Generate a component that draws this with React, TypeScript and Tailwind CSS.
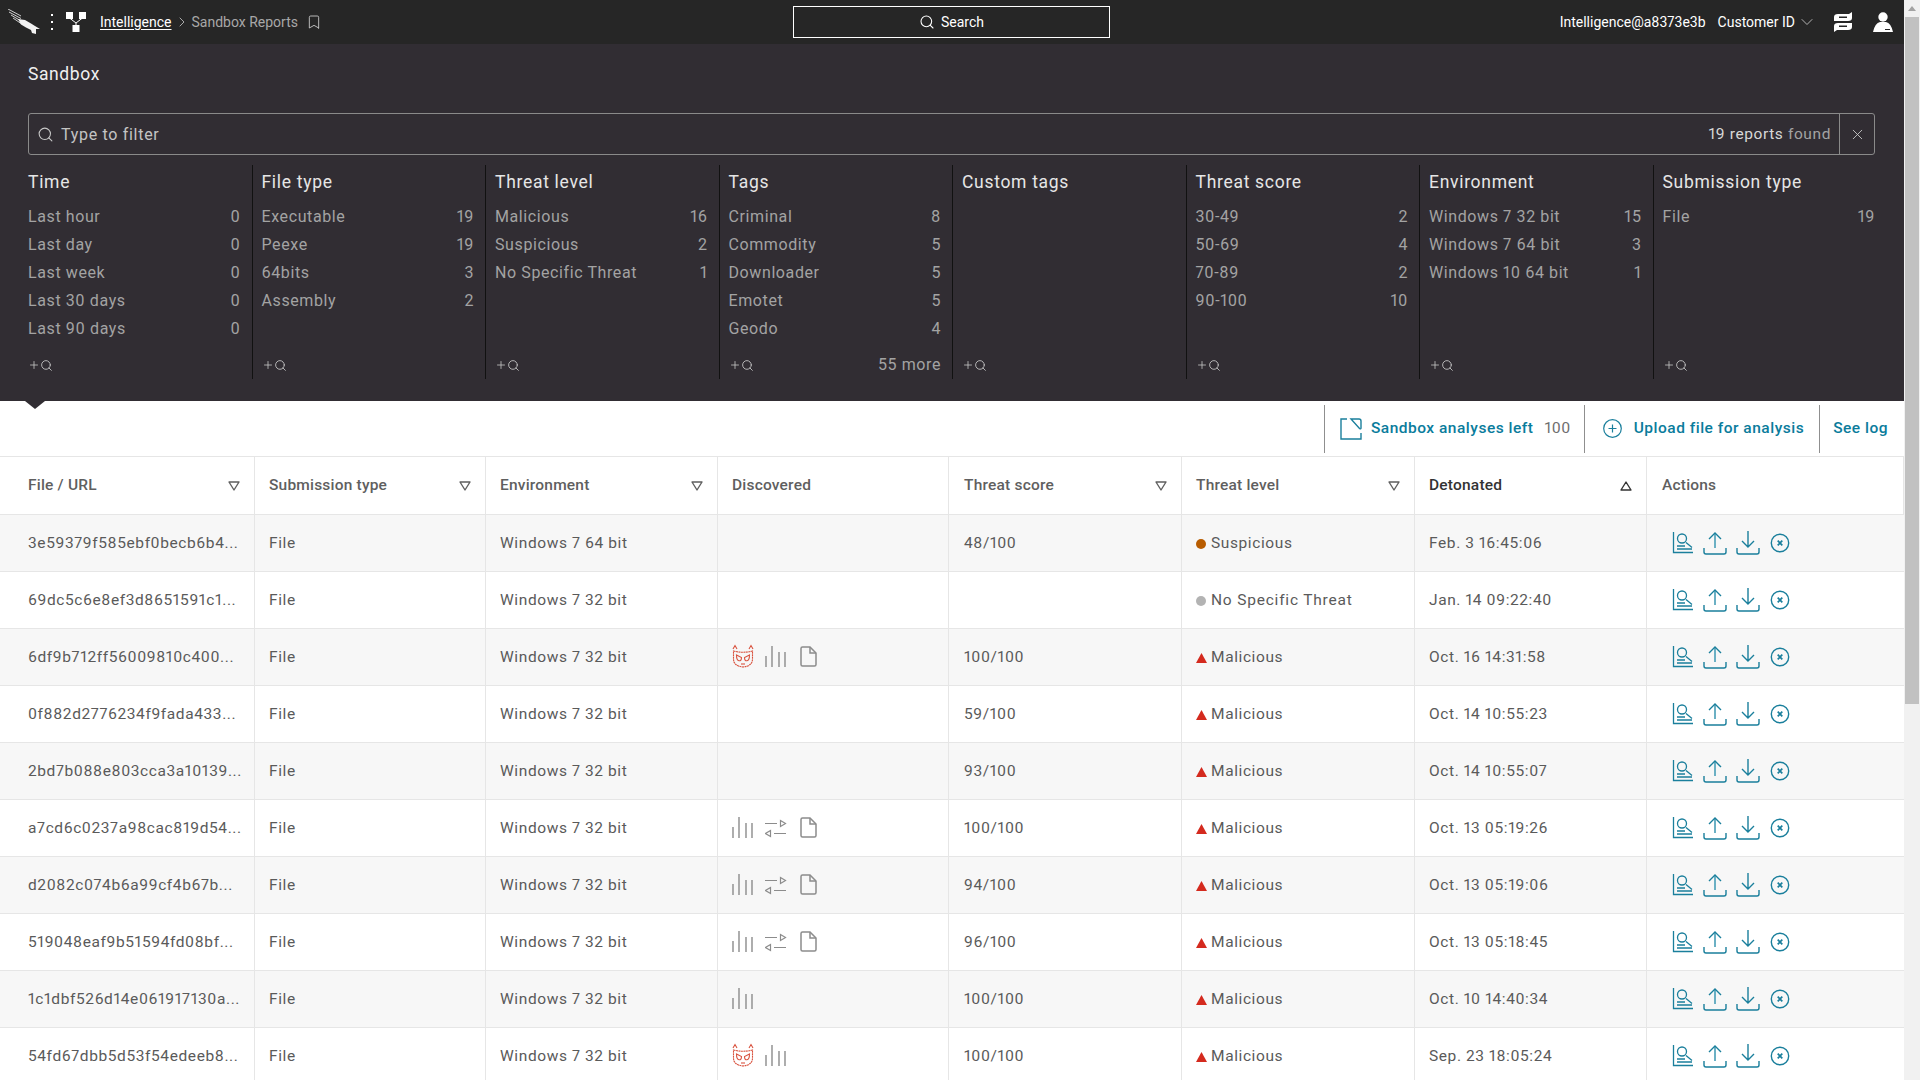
import { Bookmark, ChevronDown, ChevronRight, Plus, Search, X } from "lucide-react"

const COLS = "grid grid-cols-[255px_231px_232px_231px_233px_233px_232px_257px]"

const FACETS = [
  { title: "Time", items: [["Last hour", "0"], ["Last day", "0"], ["Last week", "0"], ["Last 30 days", "0"], ["Last 90 days", "0"]] },
  { title: "File type", items: [["Executable", "19"], ["Peexe", "19"], ["64bits", "3"], ["Assembly", "2"]] },
  { title: "Threat level", items: [["Malicious", "16"], ["Suspicious", "2"], ["No Specific Threat", "1"]] },
  { title: "Tags", items: [["Criminal", "8"], ["Commodity", "5"], ["Downloader", "5"], ["Emotet", "5"], ["Geodo", "4"]], more: "55 more" },
  { title: "Custom tags", items: [] },
  { title: "Threat score", items: [["30-49", "2"], ["50-69", "4"], ["70-89", "2"], ["90-100", "10"]] },
  { title: "Environment", items: [["Windows 7 32 bit", "15"], ["Windows 7 64 bit", "3"], ["Windows 10 64 bit", "1"]] },
  { title: "Submission type", items: [["File", "19"]] },
]

type Icono = "mask" | "bars" | "sliders" | "file"

const ROWS: { hash: string; env: string; icons: Icono[]; score: string; level: string; date: string }[] = [
  { hash: "3e59379f585ebf0becb6b4...", env: "Windows 7 64 bit", icons: [], score: "48/100", level: "Suspicious", date: "Feb. 3 16:45:06" },
  { hash: "69dc5c6e8ef3d8651591c1...", env: "Windows 7 32 bit", icons: [], score: "", level: "No Specific Threat", date: "Jan. 14 09:22:40" },
  { hash: "6df9b712ff56009810c400...", env: "Windows 7 32 bit", icons: ["mask", "bars", "file"], score: "100/100", level: "Malicious", date: "Oct. 16 14:31:58" },
  { hash: "0f882d2776234f9fada433...", env: "Windows 7 32 bit", icons: [], score: "59/100", level: "Malicious", date: "Oct. 14 10:55:23" },
  { hash: "2bd7b088e803cca3a10139...", env: "Windows 7 32 bit", icons: [], score: "93/100", level: "Malicious", date: "Oct. 14 10:55:07" },
  { hash: "a7cd6c0237a98cac819d54...", env: "Windows 7 32 bit", icons: ["bars", "sliders", "file"], score: "100/100", level: "Malicious", date: "Oct. 13 05:19:26" },
  { hash: "d2082c074b6a99cf4b67b...", env: "Windows 7 32 bit", icons: ["bars", "sliders", "file"], score: "94/100", level: "Malicious", date: "Oct. 13 05:19:06" },
  { hash: "519048eaf9b51594fd08bf...", env: "Windows 7 32 bit", icons: ["bars", "sliders", "file"], score: "96/100", level: "Malicious", date: "Oct. 13 05:18:45" },
  { hash: "1c1dbf526d14e061917130a...", env: "Windows 7 32 bit", icons: ["bars"], score: "100/100", level: "Malicious", date: "Oct. 10 14:40:34" },
  { hash: "54fd67dbb5d53f54edeeb8...", env: "Windows 7 32 bit", icons: ["mask", "bars"], score: "100/100", level: "Malicious", date: "Sep. 23 18:05:24" },
]

function Falcon() {
  return (
    <svg width="32" height="26" viewBox="0 0 32 26">
      <path d="M0 0 L13 7 M1 3 L13 9.5 M3 6 L13 12 M5 9 L13 14.5" stroke="#cfcfcf" strokeWidth="1" fill="none" />
      <path d="M10 10 L17 11 L23 14.5 L27 17 L32 20 L28 20 L28 25 L24 24 L23 21 L18 18.5 L13 15.5 Z" fill="#f2f2f2" />
    </svg>
  )
}

function AppsIcon() {
  return (
    <svg width="20" height="20" viewBox="0 0 20 20" fill="#fff">
      <rect x="0" y="0" width="7" height="7" />
      <rect x="13" y="0" width="7" height="7" />
      <rect x="6.5" y="13" width="7" height="7" />
      <path d="M3.5 6 L10 11 L16.5 6 M10 11 V14" stroke="#fff" strokeWidth="1" fill="none" />
    </svg>
  )
}

function ChatsIcon() {
  return (
    <svg width="18" height="20" viewBox="0 0 18 20" fill="#fff">
      <path d="M18 0 V6 Q18 9 14 9 H0 V5 Q0 2 4 2 H15 Z M5 4.5 V6 H13 V4.5 Z" fillRule="evenodd" />
      <path d="M0 20 V14 Q0 11 4 11 H18 V15 Q18 18 14 18 H3 Z M5 13.5 V15 H13 V13.5 Z" fillRule="evenodd" />
    </svg>
  )
}

function UserIcon() {
  return (
    <svg width="20" height="20" viewBox="0 0 20 20" fill="#fff">
      <circle cx="10" cy="5" r="4.7" />
      <path d="M0 20 Q2 11 7 10 H13 Q18 11 20 20 Z M12 17 V18 H17 V17 Z" fillRule="evenodd" />
    </svg>
  )
}

function MaskIcon() {
  return (
    <svg width="22" height="24" viewBox="0 0 22 24" fill="none" stroke="#d9533f" strokeWidth="1.1" className="-mt-[2px]">
      <path d="M1 5 L3 1.5 L5 5 M17 5 L19 1.5 L21 5" />
      <path d="M1.5 7 Q11 9.5 20.5 7 V15 Q20.5 22 11 23 Q1.5 22 1.5 15 Z" strokeDasharray="2 0.5" />
      <path d="M4.5 11 L9.5 13.5 Q9.5 17 7 16.8 Q4.5 16.5 4.5 11 Z M17.5 11 L12.5 13.5 Q12.5 17 15 16.8 Q17.5 16.5 17.5 11 Z" />
      <path d="M9 20 H13" />
    </svg>
  )
}

function BarsIcon() {
  return (
    <svg width="22" height="22" viewBox="0 0 22 22" fill="none" stroke="#8c8c8c" strokeWidth="1.4">
      <path d="M1 21 V10 M7 21 V0 M14 21 V6 M20 21 V6" />
    </svg>
  )
}

function SlidersIcon() {
  return (
    <svg width="22" height="22" viewBox="0 0 22 22" fill="none" stroke="#8c8c8c" strokeWidth="1.2">
      <path d="M0 6.5 H12 M9 16.5 H21" />
      <path d="M15.5 3.5 L20.5 6.5 L15.5 9.5 Z M5.5 13.5 L0.5 16.5 L5.5 19.5 Z" />
    </svg>
  )
}

function FileIcon() {
  return (
    <svg width="17" height="21" viewBox="0 0 17 21" fill="none" stroke="#8c8c8c" strokeWidth="1.5">
      <path d="M10 1 H2.5 Q1 1 1 2.5 V18.5 Q1 20 2.5 20 H14.5 Q16 20 16 18.5 V7 Z" />
      <path d="M10 1 V7 H16" />
    </svg>
  )
}

function ReportIcon() {
  return (
    <svg width="22" height="22" viewBox="0 0 22 22" fill="none" stroke="#1a7f9c" strokeWidth="1.3">
      <path d="M1.5 0 V20.5 H21" />
      <circle cx="10" cy="6.5" r="4.5" />
      <path d="M5 14 H13 M5 17 H20 M14 10.5 L20 15.5" />
    </svg>
  )
}

function UploadIcon() {
  return (
    <svg width="24" height="24" viewBox="0 0 24 24" fill="none" stroke="#1a7f9c" strokeWidth="1.4">
      <path d="M1 17 V21 Q1 23 3 23 H21 Q23 23 23 21 V17" />
      <path d="M12 17 V2" strokeWidth="2" stroke="#6bb0c4" />
      <path d="M6 8 L12 2 L18 8" />
    </svg>
  )
}

function DownloadIcon() {
  return (
    <svg width="24" height="24" viewBox="0 0 24 24" fill="none" stroke="#1a7f9c" strokeWidth="1.4">
      <path d="M1 17 V21 Q1 23 3 23 H21 Q23 23 23 21 V17" />
      <path d="M12 16 V0 M6 10 L12 16 L18 10" />
    </svg>
  )
}

function CancelIcon() {
  return (
    <svg width="20" height="20" viewBox="0 0 20 20" fill="none" stroke="#1a7f9c" strokeWidth="1.4">
      <circle cx="10" cy="10" r="8.7" />
      <path d="M7.7 7.7 L12.3 12.3 M12.3 7.7 L7.7 12.3" strokeWidth="1.7" />
    </svg>
  )
}

function SandboxIcon() {
  return (
    <svg width="22" height="22" viewBox="0 0 22 22" fill="none" stroke="#1a7f9c" strokeWidth="1.4">
      <path d="M7 1 H1 V21 H21 V15" />
      <path d="M11 1 H19 Q21 1 21 3 V10 Q21 11.5 19.5 10.5 Z" />
    </svg>
  )
}

function Descoberto({ tipo }: { tipo: Icono }) {
  if (tipo === "mask") return <MaskIcon />
  if (tipo === "bars") return <BarsIcon />
  if (tipo === "sliders") return <SlidersIcon />
  return (
    <span className="ml-[2px] flex">
      <FileIcon />
    </span>
  )
}

function NivelIcone({ nivel }: { nivel: string }) {
  if (nivel === "Suspicious") return <span className="h-[10px] w-[10px] rounded-full bg-[#b85c00]" />
  if (nivel === "Malicious") {
    return (
      <svg width="11" height="10" viewBox="0 0 11 10" fill="#d42a1e" className="mr-[-1px]">
        <path d="M5.5 0 L11 10 H0 Z" />
      </svg>
    )
  }
  return <span className="h-[10px] w-[10px] rounded-full bg-[#b3b3b3]" />
}

function Triangulo({ up, dark }: { up?: boolean; dark?: boolean }) {
  return (
    <svg width="12" height="10" viewBox="0 0 12 10" fill="none" stroke={dark ? "#333" : "#5f5f5f"} strokeWidth="1.4">
      <path d={up ? "M6 1 L11 9 H1 Z" : "M1 1 H11 L6 9 Z"} strokeLinejoin="round" />
    </svg>
  )
}

function Cabecalho({ titulo, filtro, ativo }: { titulo: string; filtro?: boolean; ativo?: boolean }) {
  return (
    <div className="flex items-center justify-between border-r border-[#e6e6e6] pr-[14px] pl-[14px] tracking-[0.2px] first:pl-[28px] nth-5:pl-[15px] nth-8:pl-[15px]">
      <span className={ativo ? "pt-[1px] font-medium text-[#333]" : "pt-[1px] font-medium text-[#5f5f5f]"}>{titulo}</span>
      {filtro && <Triangulo />}
      {ativo && <Triangulo up dark />}
    </div>
  )
}

function Facet({ titulo, items, more, index }: { titulo: string; items: string[][]; more?: string; index: number }) {
  let padding = "pl-[9px] pr-[11px] border-l border-[#111]"
  if (index === 0) padding = "pr-[11px]"
  if (index === 7) padding = "pl-[9px] border-l border-[#111]"

  return (
    <div className={`flex min-w-0 flex-1 flex-col ${padding}`}>
      <div className="mb-[3px] flex h-[35px] items-center text-[17.5px] tracking-[0.7px] text-[#e6e6e6]">{titulo}</div>
      {items.map(([nome, total]) => (
        <div key={nome} className="flex h-[28px] items-center justify-between text-[16px] tracking-[0.6px] text-[#a3a3a3]">
          <span>{nome}</span>
          <span>{total}</span>
        </div>
      ))}
      <div className="mt-auto flex h-[28px] items-center justify-between text-[16px] text-[#a3a3a3]">
        <span className="flex items-center text-[#c8c8c8]">
          <Plus size={12} strokeWidth={1.6} />
          <Search size={13} strokeWidth={1.6} />
        </span>
        {more && <span>{more}</span>}
      </div>
    </div>
  )
}

export default function App() {
  return (
    <div className="flex h-screen overflow-hidden bg-white font-['Roboto',sans-serif] text-[15.5px] tracking-[0.6px] proportional-nums">
      <div className="flex min-w-0 flex-1 flex-col">
        <header className="grid h-[44px] shrink-0 grid-cols-[1fr_318px_1fr] items-center bg-[#262626] text-[14px] tracking-normal text-white">
          <div className="flex items-center pl-[8px]">
            <Falcon />
            <span className="ml-[11px] flex flex-col gap-[5px]">
              <span className="h-[2px] w-[2px] bg-white" />
              <span className="h-[2px] w-[2px] bg-white" />
              <span className="h-[2px] w-[2px] bg-white" />
            </span>
            <span className="ml-[13px] flex">
              <AppsIcon />
            </span>
            <a className="ml-[14px] underline underline-offset-2">Intelligence</a>
            <ChevronRight size={16} strokeWidth={1.2} className="ml-[2px] text-[#cccccc]" />
            <span className="ml-[2px] text-[#a8a8a8]">Sandbox Reports</span>
            <Bookmark size={16} strokeWidth={1.3} className="ml-[8px] text-[#d0d0d0]" />
          </div>
          <div className="mr-[1px] flex h-[32px] items-center justify-center gap-[6px] border border-white">
            <Search size={16} strokeWidth={1.6} />
            <span>Search</span>
          </div>
          <div className="flex items-center justify-end pr-[11px]">
            <span>Intelligence@a8373e3b</span>
            <span className="ml-[12px]">Customer ID</span>
            <ChevronDown size={20} strokeWidth={1} className="ml-[2px] text-[#cccccc]" />
            <span className="ml-[17px] flex">
              <ChatsIcon />
            </span>
            <span className="ml-[21px] flex">
              <UserIcon />
            </span>
          </div>
        </header>

        <section className="relative shrink-0 bg-[#312d33] pt-[16px] pr-[29px] pb-[22px] pl-[28px]">
          <h1 className="h-[28px] text-[17.5px] leading-[28px] tracking-[0.6px] text-[#f0f0f0]">Sandbox</h1>
          <div className="mt-[25px] flex h-[42px] items-center rounded-[3px] border border-[#8a8a8a] text-[16px]">
            <Search size={17} strokeWidth={1.5} className="ml-[8px] text-[#c8c8c8]" />
            <span className="ml-[7px] pt-[1px] tracking-[0.7px] text-[#c4c4c4]">Type to filter</span>
            <span className="ml-auto pt-[1px] pr-[8px] text-[15.5px]">
              <span className="text-[#d8d8d8]">19 reports</span> <span className="text-[#a3a3a3]">found</span>
            </span>
            <span className="flex h-full w-[35px] items-center justify-center border-l border-[#8a8a8a] text-[#d0d0d0]">
              <X size={17} strokeWidth={1.2} />
            </span>
          </div>
          <div className="mt-[10px] flex h-[214px]">
            {FACETS.map((f, i) => (
              <Facet key={f.title} titulo={f.title} items={f.items} more={f.more} index={i} />
            ))}
          </div>
          <svg width="20" height="8" viewBox="0 0 20 8" fill="#312d33" className="absolute top-full left-[25px]">
            <path d="M0 0 H20 L10 8 Z" />
          </svg>
        </section>

        <div className="flex h-[55px] shrink-0 items-center justify-end tracking-[0.5px] text-[#0a7c9c]">
          <div className="flex h-[48px] items-center border-l border-[#8f8f8f] pr-[13px] pl-[15px]">
            <SandboxIcon />
            <span className="ml-[9px] pt-[1px] font-medium">Sandbox analyses left</span>
            <span className="ml-[11px] pt-[1px] text-[#6e6e6e]">100</span>
          </div>
          <div className="flex h-[48px] items-center border-l border-[#8f8f8f] pr-[15px] pl-[18px]">
            <svg width="19" height="19" viewBox="0 0 19 19" fill="none" stroke="#1a7f9c" strokeWidth="1.2">
              <circle cx="9.5" cy="9.5" r="8.8" />
              <path d="M9.5 5.5 V13.5 M5.5 9.5 H13.5" />
            </svg>
            <span className="ml-[12px] pt-[1px] font-medium">Upload file for analysis</span>
          </div>
          <div className="flex h-[48px] items-center border-l border-[#8f8f8f] pr-[16px] pl-[13px]">
            <span className="pt-[1px] font-medium">See log</span>
          </div>
        </div>

        <div className={`${COLS} h-[59px] shrink-0 border-y border-[#e6e6e6]`}>
          <Cabecalho titulo="File / URL" filtro />
          <Cabecalho titulo="Submission type" filtro />
          <Cabecalho titulo="Environment" filtro />
          <Cabecalho titulo="Discovered" />
          <Cabecalho titulo="Threat score" filtro />
          <Cabecalho titulo="Threat level" filtro />
          <Cabecalho titulo="Detonated" ativo />
          <Cabecalho titulo="Actions" />
        </div>

        {ROWS.map((r, i) => (
          <div
            key={r.hash}
            className={`${COLS} h-[57px] shrink-0 border-b border-[#e6e6e6] text-[#5a5a5a] ${i % 2 === 0 ? "bg-[#f7f7f7]" : "bg-white"}`}
          >
            <div className="flex items-center border-r border-[#e6e6e6] pt-[2px] pl-[28px] whitespace-nowrap">{r.hash}</div>
            <div className="flex items-center border-r border-[#e6e6e6] pt-[2px] pl-[14px]">File</div>
            <div className="flex items-center border-r border-[#e6e6e6] pt-[2px] pl-[14px]">{r.env}</div>
            <div className="flex items-center gap-[11px] border-r border-[#e6e6e6] pb-[1px] pl-[14px]">
              {r.icons.map((ic) => (
                <Descoberto key={ic} tipo={ic} />
              ))}
            </div>
            <div className="flex items-center border-r border-[#e6e6e6] pt-[2px] pl-[15px]">{r.score}</div>
            <div className="flex items-center gap-[5px] border-r border-[#e6e6e6] pt-[2px] pl-[14px]">
              <NivelIcone nivel={r.level} />
              <span className={r.level === "No Specific Threat" ? "tracking-[0.8px]" : undefined}>{r.level}</span>
            </div>
            <div className="flex items-center border-r border-[#e6e6e6] pt-[2px] pl-[14px]">{r.date}</div>
            <div className="flex items-center pl-[25px]">
              <ReportIcon />
              <span className="ml-[9px] flex">
                <UploadIcon />
              </span>
              <span className="ml-[9px] flex">
                <DownloadIcon />
              </span>
              <span className="ml-[10px] flex">
                <CancelIcon />
              </span>
            </div>
          </div>
        ))}
      </div>

      <div className="flex w-[16px] shrink-0 flex-col bg-[#f1f1f1]">
        <div className="flex h-[17px] items-center justify-center">
          <svg width="8" height="5" viewBox="0 0 8 5" fill="#a3a3a3">
            <path d="M4 0 L8 5 H0 Z" />
          </svg>
        </div>
        <div className="ml-[1px] h-[687px] w-[14px] bg-[#c1c1c1]" />
      </div>
    </div>
  )
}
